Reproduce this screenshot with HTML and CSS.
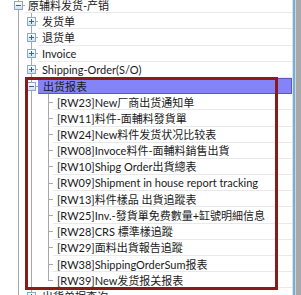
FILE: index.html
```html
<!DOCTYPE html>
<html lang="zh">

<head>
    <meta charset="UTF-8">
    <title>出货报表</title>
    <link rel="stylesheet" href="styles.css">
</head>

<body>
    <div class="window">
        <div class="tree">
            <div class="row">
                <span class="cell tee"><span class="btn minus"></span></span>
                <span class="label top">原辅料发货-产销</span>
            </div>
            <div class="row">
                <span class="cell pipe"></span>
                <span class="cell tee"><span class="btn"></span></span>
                <span class="label">发货单</span>
            </div>
            <div class="row">
                <span class="cell pipe"></span>
                <span class="cell tee"><span class="btn"></span></span>
                <span class="label">退货单</span>
            </div>
            <div class="row">
                <span class="cell pipe"></span>
                <span class="cell tee"><span class="btn"></span></span>
                <span class="label">Invoice</span>
            </div>
            <div class="row">
                <span class="cell pipe"></span>
                <span class="cell tee"><span class="btn"></span></span>
                <span class="label">Shipping-Order(S/O)</span>
            </div>
            <div class="row">
                <span class="cell pipe"></span>
                <span class="cell tee"><span class="btn minus"></span></span>
                <span class="label sel">出货报表</span>
            </div>
            <div class="row">
                <span class="cell pipe"></span>
                <span class="cell pipe"></span>
                <span class="cell leaf tee"></span>
                <span class="label">[RW23]New厂商出货通知单</span>
            </div>
            <div class="row">
                <span class="cell pipe"></span>
                <span class="cell pipe"></span>
                <span class="cell leaf tee"></span>
                <span class="label">[RW11]料件-面輔料發貨單</span>
            </div>
            <div class="row">
                <span class="cell pipe"></span>
                <span class="cell pipe"></span>
                <span class="cell leaf tee"></span>
                <span class="label">[RW24]New料件发货状况比较表</span>
            </div>
            <div class="row">
                <span class="cell pipe"></span>
                <span class="cell pipe"></span>
                <span class="cell leaf tee"></span>
                <span class="label">[RW08]Invoce料件-面輔料銷售出貨</span>
            </div>
            <div class="row">
                <span class="cell pipe"></span>
                <span class="cell pipe"></span>
                <span class="cell leaf tee"></span>
                <span class="label">[RW10]Shipg Order出貨總表</span>
            </div>
            <div class="row">
                <span class="cell pipe"></span>
                <span class="cell pipe"></span>
                <span class="cell leaf tee"></span>
                <span class="label">[RW09]Shipment in house report tracking</span>
            </div>
            <div class="row">
                <span class="cell pipe"></span>
                <span class="cell pipe"></span>
                <span class="cell leaf tee"></span>
                <span class="label">[RW13]料件樣品 出貨追蹤表</span>
            </div>
            <div class="row">
                <span class="cell pipe"></span>
                <span class="cell pipe"></span>
                <span class="cell leaf tee"></span>
                <span class="label">[RW25]Inv.-發貨單免费數量+缸號明細信息</span>
            </div>
            <div class="row">
                <span class="cell pipe"></span>
                <span class="cell pipe"></span>
                <span class="cell leaf tee"></span>
                <span class="label">[RW28]CRS 標準樣追蹤</span>
            </div>
            <div class="row">
                <span class="cell pipe"></span>
                <span class="cell pipe"></span>
                <span class="cell leaf tee"></span>
                <span class="label">[RW29]面料出貨報告追蹤</span>
            </div>
            <div class="row">
                <span class="cell pipe"></span>
                <span class="cell pipe"></span>
                <span class="cell leaf tee"></span>
                <span class="label">[RW38]ShippingOrderSum报表</span>
            </div>
            <div class="row">
                <span class="cell pipe"></span>
                <span class="cell pipe"></span>
                <span class="cell leaf ell"></span>
                <span class="label">[RW39]New发货报关报表</span>
            </div>
            <div class="row">
                <span class="cell pipe"></span>
                <span class="cell tee"><span class="btn"></span></span>
                <span class="label">出货单据查询</span>
            </div>
        </div>
        <div class="scroll"></div>
        <div class="mark"></div>
    </div>
</body>

</html>
```

FILE: styles.css
```css
body {
    margin: 0;
    background: #ffffff;
    overflow: hidden;
}

.window {
    position: relative;
    display: flex;
    width: 301px;
    height: 295px;
    overflow: hidden;
}

.tree {
    flex: 1;
    margin-top: -3px;
    padding-left: 12px;
    font-family: "Lato", "Noto Sans CJK SC", sans-serif;
    font-size: 11px;
    color: #1a1a1a;
}

.row {
    display: flex;
    height: 16.2px;
}

/* indent column, 13px each, line through the middle */
.cell {
    flex: none;
    width: 13px;
    display: flex;
    align-items: center;
    justify-content: center;
}

.pipe {
    background: linear-gradient(#a8a8a8, #a8a8a8) 6px 0 / 1px 100% no-repeat;
}

.tee {
    background:
        linear-gradient(#a8a8a8, #a8a8a8) 6px 0 / 1px 100% no-repeat,
        linear-gradient(#a8a8a8, #a8a8a8) 6px 50% / 7px 1px no-repeat;
}

.ell {
    background:
        linear-gradient(#a8a8a8, #a8a8a8) 6px 0 / 1px 50% no-repeat,
        linear-gradient(#a8a8a8, #a8a8a8) 6px 50% / 7px 1px no-repeat;
}

/* leaf rows: wider column, line sits further right */
.cell.leaf {
    width: 15px;
    background-position: 10px 0, 10px 50%;
}

/* expand / collapse box */
.btn {
    position: relative;
    width: 9px;
    height: 9px;
    box-sizing: border-box;
    border: 1px solid #8aa8c8;
    background: linear-gradient(#ffffff, #d2e1f1);
}

.btn::before {
    content: "";
    position: absolute;
    left: 1px;
    top: 3px;
    width: 5px;
    height: 1px;
    background: #2a64aa;
}

.btn::after {
    content: "";
    position: absolute;
    left: 3px;
    top: 1px;
    width: 1px;
    height: 5px;
    background: #2a64aa;
}

.btn.minus::after {
    display: none;
}

.label {
    flex: 1;
    display: flex;
    align-items: center;
    padding-left: 4px;
    border-bottom: 1px solid #e9e9e9;
    white-space: nowrap;
    overflow: hidden;
}

.label.top {
    padding-left: 3px;
}

.label.sel {
    background: #8484f8;
    border: 1px solid #5a5ab8;
    border-left-color: #8484f8;
}

.scroll {
    flex: none;
    width: 9px;
    background: linear-gradient(to right, #e2e2e2 0 1px, #6fb0e2 1px 3px, #d4d4d4 3px 4px, #a8a8a8 4px);
}

/* red annotation frame drawn over the tree */
.mark {
    position: absolute;
    left: 25px;
    top: 77px;
    width: 253px;
    height: 213px;
    box-sizing: border-box;
    border: 3px solid #8a1b1b;
}
```
